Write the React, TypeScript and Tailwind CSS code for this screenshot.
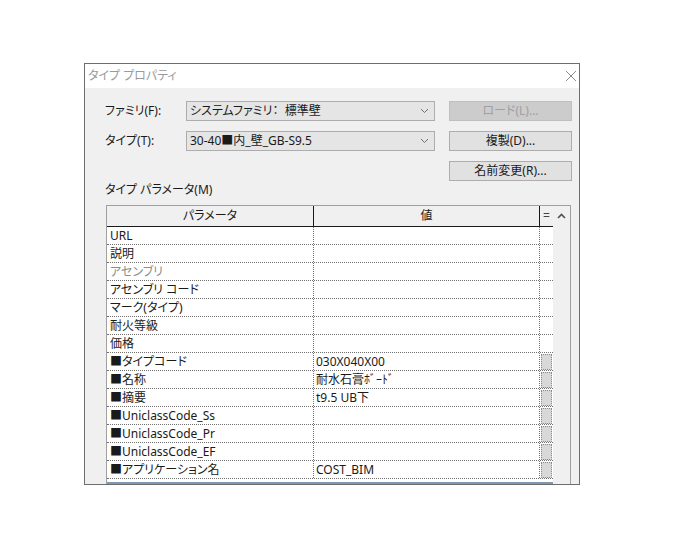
import React from "react";

type Row = { name: string; value?: string; disabled?: boolean; btn?: boolean };

const rows: Row[] = [
  { name: "URL" },
  { name: "説明" },
  { name: "アセンブリ", disabled: true },
  { name: "アセンブリ コード" },
  { name: "マーク(タイプ)" },
  { name: "耐火等級" },
  { name: "価格" },
  { name: "■タイプコード", value: "030X040X00", btn: true },
  { name: "■名称", value: "耐水石膏ﾎﾞｰﾄﾞ", btn: true },
  { name: "■摘要", value: "t9.5 UB下", btn: true },
  { name: "■UniclassCode_Ss", btn: true },
  { name: "■UniclassCode_Pr", btn: true },
  { name: "■UniclassCode_EF", btn: true },
  { name: "■アプリケーション名", value: "COST_BIM", btn: true },
];

function Chevron({ up = false }: { up?: boolean }) {
  return (
    <svg width="9" height="6" viewBox="0 0 9 6" className="shrink-0">
      <path
        d={up ? "M1 5 L4.5 1.5 L8 5" : "M1 1 L4.5 4.5 L8 1"}
        fill="none"
        stroke={up ? "#505050" : "#707070"}
        strokeWidth={up ? 1.6 : 1}
      />
    </svg>
  );
}

function Combo({ text }: { text: string }) {
  return (
    <div className="w-[249px] h-[20px] bg-[#e5e5e5] border border-[#adadad] flex items-center justify-between pl-[3px] pr-[5px]">
      <span className="leading-none whitespace-pre">{text}</span>
      <Chevron />
    </div>
  );
}

function Btn({ label, disabled = false }: { label: string; disabled?: boolean }) {
  return (
    <button
      className={`w-[123px] h-[20px] border flex items-center justify-center leading-none ${
        disabled ? "bg-[#cccccc] border-[#bfbfbf] text-[#a0a0a0]" : "bg-[#e1e1e1] border-[#adadad] text-[#1a1a1a]"
      }`}
    >
      {label}
    </button>
  );
}

export default function App() {
  return (
    <div className="w-[700px] h-[560px] bg-white pt-[63px] pl-[84px] font-['Noto_Sans','Noto_Sans_CJK_JP',sans-serif] text-[12px] text-[#1a1a1a] [font-feature-settings:'palt']">
      <div className="w-[496px] h-[422px] border border-[#6d6d6d] flex flex-col overflow-hidden">
        {/* title bar */}
        <div className="h-[24px] bg-white flex items-center justify-between pl-[3px] pr-[2px] shrink-0">
          <span className="text-[#9a9a9a]">タイプ プロパティ</span>
          <svg width="12" height="12" viewBox="0 0 12 12">
            <path d="M1 1 L11 11 M11 1 L1 11" stroke="#8a8a8a" strokeWidth="1" />
          </svg>
        </div>

        <div className="flex-1 bg-[#f0f0f0] pl-[20px] pr-[5px] pt-[13px] overflow-hidden">
          <div className="flex">
            <div className="flex flex-col gap-[10px]">
              <div className="flex items-center">
                <span className="w-[81px]">ファミリ(F):</span>
                <Combo text="システムファミリ：  標準壁" />
              </div>
              <div className="flex items-center">
                <span className="w-[81px]">タイプ(T):</span>
                <Combo text="30-40■内_壁_GB-S9.5" />
              </div>
            </div>
            <div className="ml-[14px] flex flex-col gap-[10px]">
              <Btn label="ロード(L)..." disabled />
              <Btn label="複製(D)..." />
              <Btn label="名前変更(R)..." />
            </div>
          </div>

          <div className="mt-[1px] leading-[16px]">タイプ パラメータ(M)</div>

          {/* parameter grid */}
          <div className="mt-[7px] ml-[1px] w-[465px] border-t border-l border-r border-[#a0a0a0] flex">
            <div className="w-[446px] bg-white">
              <div className="h-[21px] bg-[#f0f0f0] border-b border-[#1a1a1a] flex">
                <div className="w-[207px] border-r border-[#1a1a1a] flex items-center justify-center">パラメータ</div>
                <div className="w-[226px] border-r border-[#1a1a1a] flex items-center justify-center">値</div>
                <div className="w-[13px] flex items-center justify-center text-[#404040]">=</div>
              </div>
              {rows.map((r) => (
                <div key={r.name} className="h-[18px] border-b border-dotted border-[#707070] flex">
                  <div
                    className={`w-[207px] border-r border-dotted border-[#707070] pl-[3px] flex items-center whitespace-nowrap ${
                      r.disabled ? "text-[#8c8c8c]" : ""
                    }`}
                  >
                    {r.name}
                  </div>
                  <div className="w-[226px] border-r border-dotted border-[#707070] pl-[2px] flex items-center whitespace-nowrap">
                    {r.value ?? ""}
                  </div>
                  <div className="w-[13px] flex items-center justify-center">
                    {r.btn && <div className="w-[11px] h-[16px] bg-[#d8d8d8] border border-dotted border-[#8a8a8a]" />}
                  </div>
                </div>
              ))}
              <div className="h-[3px] bg-white" />
              <div className="h-[2px] bg-[#8197b0]" />
            </div>
            <div className="w-[17px] bg-[#f0f0f0] flex flex-col items-center pt-[7px]">
              <Chevron up />
            </div>
          </div>
        </div>
      </div>
    </div>
  );
}
